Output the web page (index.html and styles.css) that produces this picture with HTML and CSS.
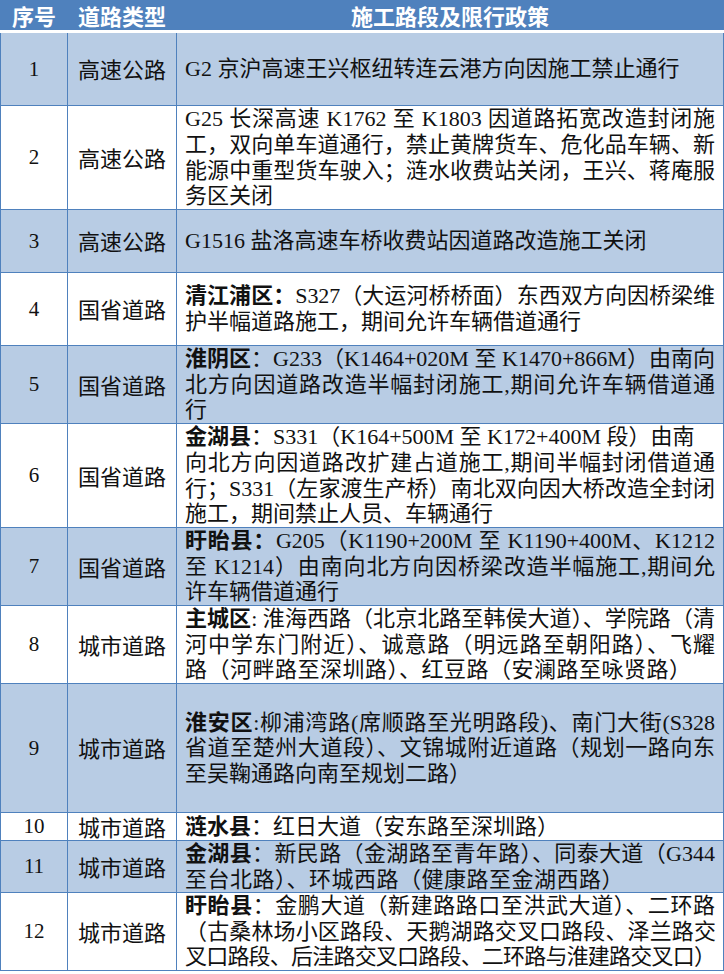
FILE: index.html
```html
<!DOCTYPE html>
<html lang="zh-CN">
<head>
<meta charset="utf-8">
<title>施工路段及限行政策</title>
<link rel="stylesheet" href="styles.css">
</head>
<body>
<table class="grid">
  <colgroup><col class="c1"><col class="c2"><col class="c3"></colgroup>
  <thead>
    <tr><th>序号</th><th>道路类型</th><th>施工路段及限行政策</th></tr>
  </thead>
  <tbody>
    <tr class="alt h73">
      <td class="no">1</td><td class="kind">高速公路</td>
      <td class="desc"><span class="ln">G2 京沪高速王兴枢纽转连云港方向因施工禁止通行</span></td>
    </tr>
    <tr class="h104">
      <td class="no">2</td><td class="kind">高速公路</td>
      <td class="desc"><span class="ln j">G25 长深高速 K1762 至 K1803 因道路拓宽改造封闭施</span><span class="ln j">工，双向单车道通行，禁止黄牌货车、危化品车辆、新</span><span class="ln j">能源中重型货车驶入；涟水收费站关闭，王兴、蒋庵服</span><span class="ln">务区关闭</span></td>
    </tr>
    <tr class="alt h63">
      <td class="no">3</td><td class="kind">高速公路</td>
      <td class="desc"><span class="ln">G1516 盐洛高速车桥收费站因道路改造施工关闭</span></td>
    </tr>
    <tr class="h73">
      <td class="no">4</td><td class="kind">国省道路</td>
      <td class="desc"><span class="ln j t1"><b class="k">清江浦区：</b>S327（大运河桥桥面）东西双方向因桥梁维</span><span class="ln">护半幅道路施工，期间允许车辆借道通行</span></td>
    </tr>
    <tr class="alt h78">
      <td class="no">5</td><td class="kind">国省道路</td>
      <td class="desc"><span class="ln j"><b class="k">淮阴区</b>：G233（K1464+020M 至 K1470+866M）由南向</span><span class="ln j">北方向因道路改造半幅封闭施工,期间允许车辆借道通</span><span class="ln">行</span></td>
    </tr>
    <tr class="h104">
      <td class="no">6</td><td class="kind">国省道路</td>
      <td class="desc"><span class="ln"><b class="k">金湖县</b>：S331（K164+500M 至 K172+400M 段）由南</span><span class="ln j">向北方向因道路改扩建占道施工,期间半幅封闭借道通</span><span class="ln j">行；S331（左家渡生产桥）南北双向因大桥改造全封闭</span><span class="ln">施工，期间禁止人员、车辆通行</span></td>
    </tr>
    <tr class="alt h78">
      <td class="no">7</td><td class="kind">国省道路</td>
      <td class="desc"><span class="ln j"><b class="k">盱眙县：</b>G205（K1190+200M 至 K1190+400M、K1212</span><span class="ln j">至 K1214）由南向北方向因桥梁改造半幅施工,期间允</span><span class="ln">许车辆借道通行</span></td>
    </tr>
    <tr class="h78">
      <td class="no">8</td><td class="kind">城市道路</td>
      <td class="desc"><span class="ln j"><b class="k">主城区</b>: 淮海西路（北京北路至韩侯大道）、学院路（清</span><span class="ln j">河中学东门附近）、诚意路（明远路至朝阳路）、飞耀</span><span class="ln wide">路（河畔路至深圳路）、红豆路（安澜路至咏贤路）</span></td>
    </tr>
    <tr class="alt h129">
      <td class="no">9</td><td class="kind">城市道路</td>
      <td class="desc"><span class="ln j"><b class="k">淮安区</b>:柳浦湾路(席顺路至光明路段)、南门大街(S328</span><span class="ln j">省道至楚州大道段）、文锦城附近道路（规划一路向东</span><span class="ln">至吴鞠通路向南至规划二路）</span></td>
    </tr>
    <tr class="h28">
      <td class="no">10</td><td class="kind">城市道路</td>
      <td class="desc"><span class="ln"><b class="k">涟水县</b>：红日大道（安东路至深圳路）</span></td>
    </tr>
    <tr class="alt h52">
      <td class="no">11</td><td class="kind">城市道路</td>
      <td class="desc"><span class="ln j"><b class="k">金湖县</b>：新民路（金湖路至青年路）、同泰大道（G344</span><span class="ln wide">至台北路）、环城西路（健康路至金湖西路）</span></td>
    </tr>
    <tr class="h78">
      <td class="no">12</td><td class="kind">城市道路</td>
      <td class="desc"><span class="ln j"><b class="k">盱眙县</b>：金鹏大道（新建路路口至洪武大道）、二环路</span><span class="ln j t3">（古桑林场小区路段、天鹅湖路交叉口路段、泽兰路交</span><span class="ln j t3">叉口路段、后洼路交叉口路段、二环路与淮建路交叉口）</span></td>
    </tr>
  </tbody>
</table>
</body>
</html>
```

FILE: styles.css
```css
body {
  margin: 0;
  background: #ffffff;
}

.grid {
  border-collapse: collapse;
  table-layout: fixed;
  width: 723px;
}

.c1 { width: 67px; }
.c2 { width: 109px; }
.c3 { width: 547px; }

.grid th {
  background: #4f81bd;
  color: #ffffff;
  font-family: "Noto Sans CJK SC", sans-serif;
  font-weight: 700;
  font-size: 22px;
  line-height: 30px;
  height: 30px;
  padding: 0;
  text-align: center;
  border-left: 1px solid #4f81bd;
  border-right: 1px solid #4f81bd;
  border-top: 0;
  border-bottom: 3px solid #ffffff;
}

.grid td {
  border: 1px solid #4f81bd;
  padding: 0;
  vertical-align: middle;
  color: #111111;
  background: #ffffff;
}

.grid tr.alt td {
  background: #b8cce4;
}

.no {
  text-align: center;
  font-family: "Liberation Serif", serif;
  font-size: 21px;
}

.kind {
  text-align: center;
  font-family: "Noto Sans CJK SC", sans-serif;
  font-size: 22px;
  line-height: 25.6px;
}

.grid td.desc {
  padding: 0 8px;
  font-family: "Liberation Serif", "Noto Sans CJK SC", serif;
  font-size: 22px;
  line-height: 25.6px;
}

.ln {
  display: block;
  text-align: left;
}

.ln.j {
  text-align: justify;
  text-align-last: justify;
}

.t1 { letter-spacing: -0.1px; }
.t3 { letter-spacing: -0.9px; }
.wide { letter-spacing: 0.5px; }

.k {
  font-family: "Noto Sans CJK SC", sans-serif;
  font-weight: 700;
  line-height: 20px;
}

.h28 td { height: 27px; }
.h52 td { height: 51px; }
.h63 td { height: 62px; }
.h73 td { height: 72px; }
.h78 td { height: 77px; }
.h104 td { height: 103px; }
.h129 td { height: 128px; }
```
